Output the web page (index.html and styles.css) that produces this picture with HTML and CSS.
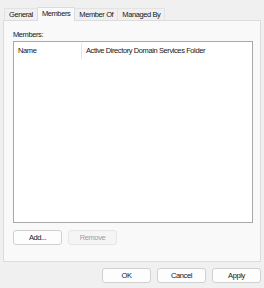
FILE: index.html
```html
<!DOCTYPE html>
<html>
<head>
	<title>Properties</title>
	<link rel="stylesheet" href="styles.css">
</head>
<body>
	<div class="tabs">
		<div class="tab">General</div>
		<div class="tab active">Members</div>
		<div class="tab">Member Of</div>
		<div class="tab">Managed By</div>
	</div>
	<div class="panel">
		<div class="label">Members:</div>
		<div class="list">
			<div class="list-head">
				<div class="col col-name">Name</div>
				<div class="col col-folder">Active Directory Domain Services Folder</div>
			</div>
		</div>
		<div class="actions">
			<button class="btn">Add...</button>
			<button class="btn disabled">Remove</button>
		</div>
	</div>
	<div class="footer">
		<button class="btn">OK</button>
		<button class="btn">Cancel</button>
		<button class="btn">Apply</button>
	</div>
</body>
</html>
```
FILE: styles.css
```css
body {
	margin: 0;
	padding: 7px 3px 0 3px;
	background-color: #f0f0f0;
	font-family: "Liberation Sans", Arial, sans-serif;
	font-size: 7.5px;
	letter-spacing: -0.4px;
	color: #161616;
	width: 258px;
}

/* tab strip */
.tabs {
	display: flex;
	align-items: flex-end;
	height: 13px;
	padding-left: 1px;
}
.tab {
	height: 11px;
	line-height: 11px;
	padding: 0 4px;
	border: 1px solid #e3e3e3;
	border-bottom: none;
	border-right: none;
	background-color: #f0f0f0;
}
.tab.active {
	height: 13px;
	line-height: 12px;
	margin-bottom: -1px;
	background-color: #f9f9f9;
	border-color: #dcdcdc;
	border-right: 1px solid #dcdcdc;
	position: relative;
	z-index: 1;
}
.tab.active + .tab {
	border-left: none;
}
.tab:last-child {
	border-right: 1px solid #e3e3e3;
}

/* tab page */
.panel {
	height: 240px;
	background-color: #f9f9f9;
	border: 1px solid #dcdcdc;
	padding: 0 7px 0 9px;
	display: flex;
	flex-direction: column;
}
.label {
	margin-top: 8px;
	height: 11px;
	line-height: 11px;
}
.list {
	margin-top: 1px;
	height: 180px;
	background-color: #fff;
	border: 1px solid #a9a9a9;
}
.list-head {
	display: flex;
	height: 16px;
	margin-top: 1px;
}
.col {
	line-height: 16px;
	padding-left: 4px;
}
.col-name {
	width: 63px;
	border-right: 1px solid #e5e5e5;
}

/* buttons */
.actions {
	display: flex;
	gap: 6px;
	margin-top: 7px;
}
.btn {
	width: 49px;
	height: 15px;
	padding: 0;
	font-family: inherit;
	font-size: 7.5px;
	letter-spacing: -0.4px;
	color: #161616;
	background-color: #fdfdfd;
	border: 1px solid #d0d0d0;
	border-radius: 3px;
}
.btn.disabled {
	color: #9d9d9d;
	background-color: #f5f5f5;
	border-color: #e6e6e6;
}
.footer {
	display: flex;
	justify-content: flex-end;
	gap: 6px;
	margin-top: 6px;
}
```
